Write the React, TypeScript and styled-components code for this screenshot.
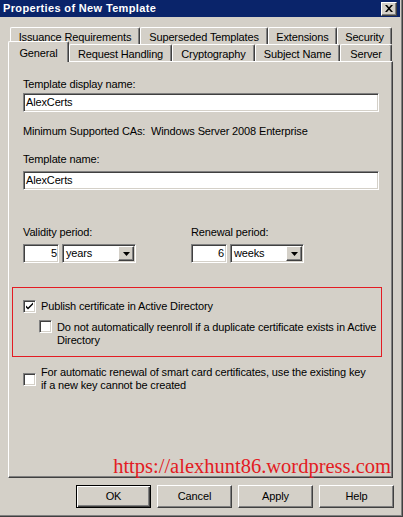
import React from "react";
import styled, { createGlobalStyle, css } from "styled-components";

const Global = createGlobalStyle`
  html, body { margin: 0; padding: 0; background: #d4d0c8; }
  body { font-family: "Liberation Sans", Arial, sans-serif; font-size: 11px; letter-spacing: -0.14px; color: #000; }
  * { box-sizing: border-box; }
`;

const raised = css`
  border: 1px solid;
  border-color: #ffffff #404040 #404040 #ffffff;
  box-shadow: inset -1px -1px 0 #808080;
  background: #d4d0c8;
`;

const sunken = css`
  border: 1px solid;
  border-color: #808080 #ffffff #ffffff #808080;
  box-shadow: inset 1px 1px 0 #404040, inset -1px -1px 0 #d4d0c8;
  background: #ffffff;
`;

const Window = styled.div`
  width: 403px;
  height: 517px;
  display: flex;
  flex-direction: column;
  background: #d4d0c8;
  padding: 0 3px 3px 0;
  box-shadow: inset -1px -1px 0 #404040, inset -2px -2px 0 #808080;
  overflow: hidden;
`;

const TitleBar = styled.div`
  height: 17px;
  background: #0a246a;
  display: flex;
  align-items: center;
  justify-content: space-between;
  padding: 0 3px 0 3px;
`;

const TitleText = styled.span`
  color: #ffffff;
  font-weight: bold;
  font-size: 11px;
  line-height: 13px;
  letter-spacing: 0.35px;
`;

const CloseButton = styled.div`
  ${raised};
  width: 16px;
  height: 14px;
  display: flex;
  align-items: center;
  justify-content: center;
`;

const Body = styled.div`
  display: flex;
  flex-direction: column;
  padding: 10px 0 0 8px;
`;

const TabRow = styled.div<{ $indent?: number }>`
  display: flex;
  align-items: flex-end;
  height: 17px;
  padding-left: ${(p) => p.$indent ?? 0}px;
`;

const Tab = styled.div<{ $w: number; $active?: boolean }>`
  width: ${(p) => p.$w}px;
  height: ${(p) => (p.$active ? 21 : 17)}px;
  margin-bottom: ${(p) => (p.$active ? -1 : 0)}px;
  border-top: 1px solid #ffffff;
  border-left: 1px solid #ffffff;
  border-right: 1px solid #404040;
  border-radius: 2px 2px 0 0;
  box-shadow: inset -1px 0 0 #808080;
  background: #d4d0c8;
  display: flex;
  align-items: center;
  justify-content: center;
  padding-top: 2px;
  line-height: 13px;
  white-space: nowrap;
  ${(p) =>
    p.$active &&
    css`
      position: relative;
      z-index: 1;
    `}
`;

const Panel = styled.div`
  width: 385px;
  height: 417px;
  border: 1px solid;
  border-color: #ffffff #404040 #404040 #ffffff;
  box-shadow: inset -1px -1px 0 #808080;
  display: flex;
  flex-direction: column;
  padding: 0 13px 0 14px;
`;

const Label = styled.div<{ $mt: number }>`
  line-height: 13px;
  margin-top: ${(p) => p.$mt}px;
  white-space: nowrap;
`;

const TextField = styled.div<{ $mt: number }>`
  ${sunken};
  height: 19px;
  margin-top: ${(p) => p.$mt}px;
  display: flex;
  align-items: center;
  padding-left: 2px;
  line-height: 13px;
`;

const InfoLine = styled.div<{ $mt: number }>`
  line-height: 13px;
  margin-top: ${(p) => p.$mt}px;
  white-space: pre;
`;

const PeriodRow = styled.div`
  display: grid;
  grid-template-columns: 168px 1fr;
  margin-top: 36px;
`;

const PeriodGroup = styled.div`
  display: flex;
  flex-direction: column;
`;

const PeriodControls = styled.div`
  display: flex;
  gap: 3px;
  margin-top: 5px;
`;

const NumBox = styled.div<{ $tight?: boolean }>`
  ${sunken};
  width: 36px;
  height: 19px;
  display: flex;
  align-items: center;
  justify-content: flex-end;
  padding-right: ${(p) => (p.$tight ? 1 : 2)}px;
  line-height: 13px;
`;

const Combo = styled.div`
  ${sunken};
  width: 74px;
  height: 19px;
  display: flex;
  align-items: center;
  justify-content: space-between;
  padding: 1px 1px 1px 3px;
  line-height: 13px;
`;

const DropButton = styled.div`
  ${raised};
  width: 16px;
  height: 15px;
  display: flex;
  align-items: center;
  justify-content: center;
`;

const Highlight = styled.div`
  border: 1px solid #e31b23;
  width: 370px;
  margin: 24px 0 0 -11px;
  padding: 12px 0 9px 10px;
  display: flex;
  flex-direction: column;
`;

const CheckRow = styled.div<{ $indent?: number; $center?: boolean; $mt?: number }>`
  display: flex;
  align-items: ${(p) => (p.$center ? "center" : "flex-start")};
  gap: 5px;
  margin-left: ${(p) => p.$indent ?? 0}px;
  margin-top: ${(p) => p.$mt ?? 0}px;
`;

const Box = styled.div`
  ${sunken};
  width: 13px;
  height: 13px;
  flex: none;
  display: flex;
  align-items: center;
  justify-content: center;
`;

const CheckText = styled.div<{ $pt?: number }>`
  line-height: 13px;
  padding-top: ${(p) => p.$pt ?? 0}px;
  white-space: nowrap;
`;

const Watermark = styled.div`
  margin-top: auto;
  margin-bottom: 1px;
  margin-right: -12px;
  align-self: flex-end;
  font-family: "Liberation Serif", "Times New Roman", serif;
  font-size: 20.5px;
  letter-spacing: 0;
  line-height: 20px;
  color: #e31b23;
  white-space: nowrap;
`;

const ButtonRow = styled.div`
  display: flex;
  justify-content: flex-end;
  gap: 6px;
  margin-top: 7px;
  padding-right: 6px;
`;

const Button = styled.div<{ $default?: boolean }>`
  width: 75px;
  height: 23px;
  display: flex;
  align-items: center;
  justify-content: center;
  line-height: 13px;
  background: #d4d0c8;
  ${(p) =>
    p.$default
      ? css`
          border: 1px solid #000;
          box-shadow: inset 1px 1px 0 #ffffff, inset -1px -1px 0 #404040,
            inset -2px -2px 0 #808080;
        `
      : css`
          border: 1px solid;
          border-color: #ffffff #404040 #404040 #ffffff;
          box-shadow: inset -1px -1px 0 #808080;
        `}
`;

const CloseIcon = () => (
  <svg width="8" height="7" viewBox="0 0 8 7">
    <path d="M0 0h2l2 2.3L6 0h2L5 3.5 8 7H6L4 4.7 2 7H0l3-3.5z" fill="#000" />
  </svg>
);

const Arrow = () => (
  <svg width="7" height="4" viewBox="0 0 7 4">
    <path d="M0 0h7L3.5 4z" fill="#000" />
  </svg>
);

const Check = () => (
  <svg width="9" height="9" viewBox="0 0 9 9">
    <path d="M1 3.5l2 2 5-5v2l-5 5-2-2z" fill="#000" />
  </svg>
);

const row1 = [
  { t: "Issuance Requirements", w: 130 },
  { t: "Superseded Templates", w: 128 },
  { t: "Extensions", w: 69 },
  { t: "Security", w: 55 },
];

const row2 = [
  { t: "General", w: 61, active: true },
  { t: "Request Handling", w: 103 },
  { t: "Cryptography", w: 83 },
  { t: "Subject Name", w: 85 },
  { t: "Server", w: 52 },
];

export default function App() {
  return (
    <>
      <Global />
      <Window>
        <TitleBar>
          <TitleText>Properties of New Template</TitleText>
          <CloseButton>
            <CloseIcon />
          </CloseButton>
        </TitleBar>
        <Body>
          <TabRow $indent={2}>
            {row1.map((t) => (
              <Tab key={t.t} $w={t.w}>
                {t.t}
              </Tab>
            ))}
          </TabRow>
          <TabRow>
            {row2.map((t) => (
              <Tab key={t.t} $w={t.w} $active={t.active}>
                {t.t}
              </Tab>
            ))}
          </TabRow>
          <Panel>
            <Label $mt={16}>Template display name:</Label>
            <TextField $mt={2}>AlexCerts</TextField>
            <InfoLine $mt={13}>{"Minimum Supported CAs:  Windows Server 2008 Enterprise"}</InfoLine>
            <Label $mt={15}>Template name:</Label>
            <TextField $mt={5}>AlexCerts</TextField>
            <PeriodRow>
              <PeriodGroup>
                <Label $mt={0}>Validity period:</Label>
                <PeriodControls>
                  <NumBox $tight>5</NumBox>
                  <Combo>
                    <span>years</span>
                    <DropButton>
                      <Arrow />
                    </DropButton>
                  </Combo>
                </PeriodControls>
              </PeriodGroup>
              <PeriodGroup>
                <Label $mt={0}>Renewal period:</Label>
                <PeriodControls>
                  <NumBox>6</NumBox>
                  <Combo>
                    <span>weeks</span>
                    <DropButton>
                      <Arrow />
                    </DropButton>
                  </Combo>
                </PeriodControls>
              </PeriodGroup>
            </PeriodRow>
            <Highlight>
              <CheckRow $center>
                <Box>
                  <Check />
                </Box>
                <CheckText>Publish certificate in Active Directory</CheckText>
              </CheckRow>
              <CheckRow $indent={16} $mt={7}>
                <Box />
                <CheckText $pt={1}>
                  Do not automatically reenroll if a duplicate certificate exists in Active
                  <br />
                  Directory
                </CheckText>
              </CheckRow>
            </Highlight>
            <CheckRow $center $mt={9}>
              <Box />
              <CheckText>
                For automatic renewal of smart card certificates, use the existing key
                <br />
                if a new key cannot be created
              </CheckText>
            </CheckRow>
            <Watermark>https://alexhunt86.wordpress.com</Watermark>
          </Panel>
          <ButtonRow>
            <Button $default>OK</Button>
            <Button>Cancel</Button>
            <Button>Apply</Button>
            <Button>Help</Button>
          </ButtonRow>
        </Body>
      </Window>
    </>
  );
}
